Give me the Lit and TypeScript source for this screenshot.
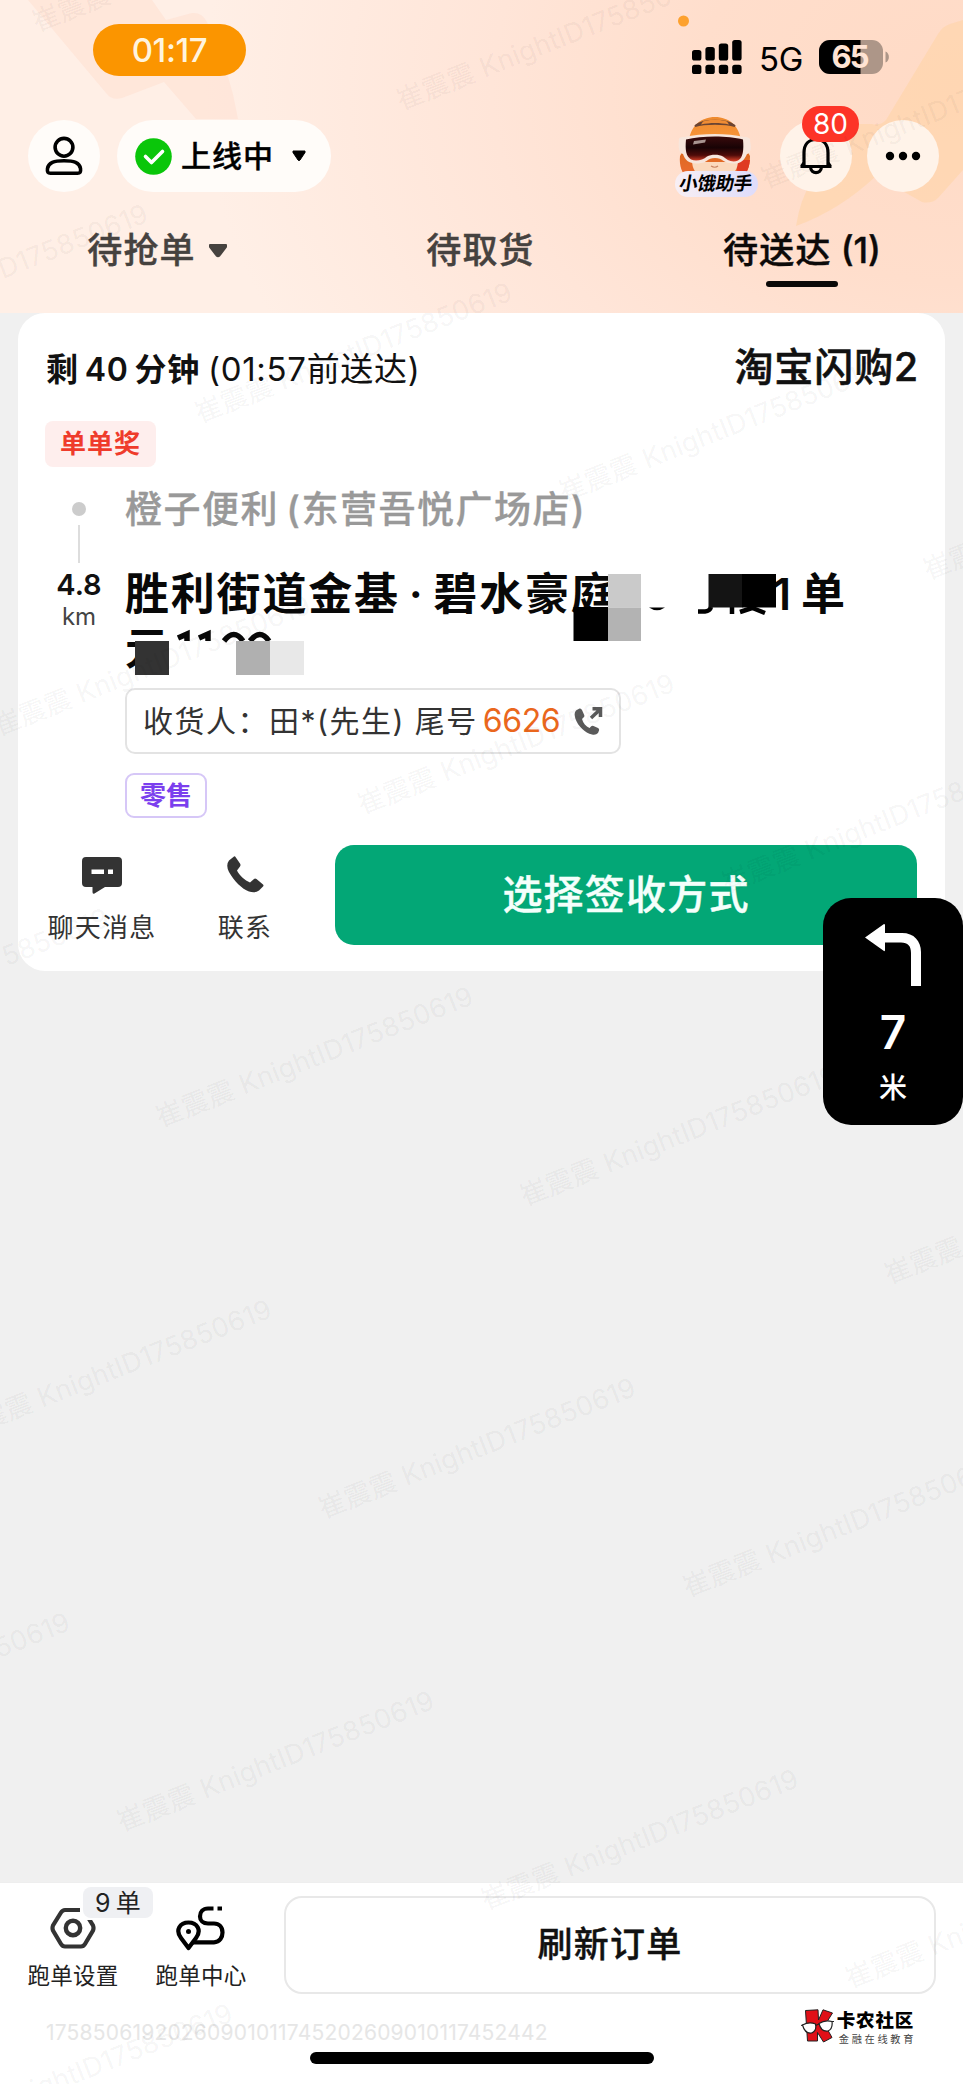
import { LitElement, html, svg, css } from "lit";
import { customElement } from "lit/decorators.js";

const shared = css`
  :host { display: block; box-sizing: border-box; font-family: Inter, "Noto Sans CJK SC", sans-serif; line-height: 1.3; }
  * { box-sizing: border-box; }
  svg { display: block; flex: none; }
  span, div { white-space: nowrap; }
`;

@customElement("status-bar")
class StatusBar extends LitElement {
  static styles = [shared, css`
    .bar { display: flex; height: 120px; padding: 24px 73px 0 93px; }
    .clock { width: 153px; height: 52px; border-radius: 26px; background: #fb9500; color: #fff4de;
      font-size: 33px; font-weight: 500; display: flex; align-items: center; justify-content: center; letter-spacing: -0.4px; }
    .right { margin-left: auto; padding-top: 16px; height: 52px; display: flex; align-items: flex-start; }
    .net { font-size: 33px; line-height: 40px; margin: -1px 15px 0 16px; letter-spacing: -0.3px; width: 46px; text-align: center; }
  `];
  render() {
    return html`<div class="bar">
      <div class="clock">01:17</div>
      <div class="right">
        <svg width="50" height="34" viewBox="0 0 50 34">
          ${[10, 7, 3.5, 0].map((t, i) => svg`<rect x=${i * 13.4} y=${t} width="9.4" height=${20.5 - t} rx="2.6"/>
          <rect x=${i * 13.4} y="24.8" width="9.4" height="9.2" rx="2.6"/>`)}
        </svg>
        <span class="net">5G</span>
        <svg width="71" height="34" viewBox="0 0 71 34">
          <defs><clipPath id="b"><rect width="64" height="34" rx="11"/></clipPath></defs>
          <g clip-path="url(#b)"><rect width="64" height="34" fill="#ad9688"/><rect width="41.5" height="34"/></g>
          <path d="M66.5 11.5c4.500 1.500 4.500 9.500 0 11z" fill="#ad9688"/>
          <text x="31.500" y="28" font-size="31" font-weight="700" fill="#ffe4d4" text-anchor="middle" font-family="Inter" textLength="38">65</text>
        </svg>
      </div>
    </div>`;
  }
}

@customElement("tool-bar")
class ToolBar extends LitElement {
  static styles = [shared, css`
    .bar { display: flex; height: 72px; padding: 0 24px 0 27.500px; align-items: center; }
    .round { width: 72px; height: 72px; border-radius: 36px; background: #fffcf9; display: flex; align-items: center; justify-content: center; position: relative; }
    .soft { background: #fff3e9; }
    .online { margin-left: 17.500px; width: 214px; height: 72px; border-radius: 36px; background: #fffcf9; display: flex; align-items: center; padding-left: 18px; font-size: 30px; font-weight: 500; letter-spacing: 1px; -webkit-text-stroke: .4px; }
    .online span { margin: 0 18px 0 9px; }
    .helper { margin-left: auto; margin-right: 20px; width: 86px; height: 84px; }
    .more { margin-left: 15.500px; }
    .badge { position: absolute; left: 22.500px; top: -14px; width: 57px; height: 36px; border-radius: 18px; background: #fd3427; color: #fff; font-size: 28px; display: flex; align-items: center; justify-content: center; }
  `];
  render() {
    return html`<div class="bar">
      <div class="round"><svg width="40" height="40" viewBox="0 0 40 40" fill="none" stroke="#000" stroke-width="3.600">
        <circle cx="20" cy="11.300" r="8.900"/><path d="M3.500 32.500C4.500 26.500 10 24.800 20 24.800S35.500 26.500 36.500 32.500C37 36 36 37.200 33.500 37.200H6.500C4 37.200 3 36 3.500 32.500Z"/></svg></div>
      <div class="online">
        <svg width="37" height="37" viewBox="0 0 37 37"><circle cx="18.500" cy="18.500" r="18.300" fill="#0ac60a"/><path d="M10.500 18.500l6 6L27.500 13.500" fill="none" stroke="#fff" stroke-width="3.600" stroke-linecap="round" stroke-linejoin="round"/></svg>
        <span>上线中</span>
        <svg width="14" height="12" viewBox="0 0 14 12"><path d="M1 1h12v1.500L8 10Q7 11.200 6 10L1 2.500z" stroke="#000" stroke-linejoin="round"/></svg>
      </div>
      <svg class="helper" width="86" height="84" viewBox="0 -2 86 84">
        <defs>
          <linearGradient id="v" x1="0" y1="0" x2="0" y2="1"><stop offset="0" stop-color="#3a0b0c"/><stop offset=".45" stop-color="#180305"/><stop offset=".75" stop-color="#4e0b09"/><stop offset="1" stop-color="#e0442a"/></linearGradient>
          <linearGradient id="h" x1="0" y1="0" x2="0" y2="1"><stop offset="0" stop-color="#ee8a2e"/><stop offset=".35" stop-color="#f79438"/><stop offset=".6" stop-color="#dd6a22"/><stop offset="1" stop-color="#ee6a30"/></linearGradient>
          <linearGradient id="p" x1="0" y1="0" x2="1" y2="0"><stop offset="0" stop-color="#f8eff4"/><stop offset="1" stop-color="#dedcfb"/></linearGradient>
        </defs>
        <path d="M15 24C17 10 27 1 41 1S65 10 67 24L76 40C76 52 72 60 66 62H14C8 58 5 50 6 40Z" fill="url(#h)"/>
        <path d="M62 44H76C75 54 71 61 64 62Z" fill="#df3b22"/>
        <path d="M21 10C30 3 52 3 61 10C51 7 31 7 21 10Z" fill="#6b4433" stroke="#6b4433" stroke-width="2"/>
        <path d="M29 5.500C35 3 47 3 53 5.500L55 8.500C46 6.500 36 6.500 27 8.500Z" fill="#f08c34"/>
        <path d="M18 46H64C63 56 58 62 41 62S19 56 18 46Z" fill="#fbd9bd"/>
        <path d="M37 50Q41 52.500 44 50" fill="none" stroke="#c98462" stroke-width="1.200"/>
        <path d="M5 24C4 22 7 21 10 21C28 17 54 17 70 21C75 21 77 23 76 25C78 33 76 38 73 38C70 45 66 48 59 47.500C48 47 49 42 41 42S34 47 24 47.500C15 48 11 44 9 38C5 37 4 32 5 24Z" fill="#f7e6dc"/>
        <path d="M12 23.500C28 19.500 54 19.500 69 23.500C70 34 69 42 64 44.500C58 47 53 44 49 40.500C45 38 37 38 33 40.500C29 44 22 46 17 43.500C12 40 11 34 12 23.500Z" fill="url(#v)"/>
        <path d="M20 25l12-1.500-1 3-12 2z" fill="#a89490"/>
        <rect x="1" y="55" width="83" height="26" rx="13" fill="url(#p)"/>
        <text x="41" y="74.500" text-anchor="middle" font-size="18.500" font-weight="700" textLength="73" transform="translate(13 0) skewX(-10)" font-family="Noto Sans CJK SC">小饿助手</text>
      </svg>
      <div class="round soft"><svg width="34" height="40" viewBox="0 0 34 40" fill="none" stroke="#000" stroke-width="3.200" stroke-linejoin="round">
        <path d="M5 29V17C5 8 10 3.500 17 3.500S29 8 29 17V29"/><path d="M1.500 30.500H32.500M5 27L2.500 30.500M29 27L31.500 30.500"/><path d="M11.500 31C12 38.500 22 38.500 22.500 31"/></svg>
        <div class="badge">80</div></div>
      <div class="round soft more"><svg width="36" height="10" viewBox="0 0 36 10"><circle cx="5" cy="5" r="4.200"/><circle cx="18" cy="5" r="4.200"/><circle cx="31" cy="5" r="4.200"/></svg></div>
    </div>`;
  }
}

@customElement("order-tabs")
class OrderTabs extends LitElement {
  static styles = [shared, css`
    .tabs { display: grid; grid-template-columns: 320px 321px 322px; height: 121px; padding-top: 36px; color: #46423f; font-size: 35px; font-weight: 500; letter-spacing: 1.200px; -webkit-text-stroke: .4px; }
    .tab { display: flex; flex-direction: column; align-items: center; gap: 8px; line-height: 45px; }
    .row { display: flex; align-items: center; gap: 12px; }
    .first { padding-right: 5px; }
    .on { color: #0c0a09; }
    .paren { letter-spacing: 0; margin-left: 9px; }
    .line { width: 72px; height: 6px; border-radius: 3px; background: #0b0908; }
    .on .row { gap: 0; padding-right: 0; }
  `];
  render() {
    return html`<div class="tabs">
      <div class="tab first"><div class="row">待抢单<svg width="20" height="16" viewBox="0 0 20 16"><path d="M2 2h16v2L11.500 12.500Q10 14 8.500 12.500L2 4z" fill="#46423f" stroke="#46423f" stroke-width="2" stroke-linejoin="round"/></svg></div></div>
      <div class="tab">待取货</div>
      <div class="tab on"><div class="row">待送达<span class="paren">(1)</span></div><div class="line"></div></div>
    </div>`;
  }
}

@customElement("order-card")
class OrderCard extends LitElement {
  static styles = [shared, css`
    .card { background: #fff; border-radius: 27px; height: 658px; margin: 0 18px; padding: 28px 28px 26px 27px; display: flex; flex-direction: column; }
    .head { display: flex; justify-content: space-between; align-items: center; height: 56px; color: #111; }
    .eta { display: flex; align-items: baseline; font-size: 33px; letter-spacing: .7px; padding-left: 1px; }
    .eta b { font-size: 32px; font-weight: 600; margin-right: 8px; display: flex; align-items: baseline; gap: 6px; }
    .brand { font-size: 39px; font-weight: 500; letter-spacing: .9px; margin-top: -4px; margin-right: -2px; -webkit-text-stroke: .6px; }
    .reward { margin-top: 24px; width: 111px; height: 46px; border-radius: 8px; background: #feeeed; color: #ef3b2b; font-size: 26px; font-weight: 600; letter-spacing: 1px; display: flex; align-items: center; justify-content: center; }
    .route { display: grid; grid-template-columns: 68px 1fr; column-gap: 12px; margin-top: 12px; }
    .rail { display: flex; flex-direction: column; align-items: center; padding-top: 23px; }
    .dot { width: 14px; height: 14px; border-radius: 7px; background: #ccc; }
    .stem { width: 2px; height: 38px; background: #ddd; margin: 9px 0 3px; }
    .dist { font-size: 29px; font-weight: 600; line-height: 38px; color: #111; }
    .unit { font-size: 24px; line-height: 26px; color: #444; }
    .store { font-size: 37px; font-weight: 500; color: #999; line-height: 62px; height: 60px; letter-spacing: 1.500px; word-spacing: -4px; -webkit-text-stroke: .3px; }
    .addr { position: relative; font-size: 44px; font-weight: 600; color: #080808; line-height: 55px; height: 138px; padding-top: 28px; letter-spacing: 1.800px; }
    .first { display: flex; word-spacing: -4px; }
    .tail { margin-left: 156px; display: flex; gap: 8px; }
    .mosaic { position: absolute; left: 0; top: 31px; }
    .contact { margin-top: 11px; width: 496px; height: 66px; border: 2px solid #e3e3e3; border-radius: 10px; display: flex; align-items: center; padding-left: 16px; font-size: 30px; color: #333; letter-spacing: 1.500px; }
    .phone { color: #ea671d; font-size: 32px; letter-spacing: -0.4px; margin: 0 14px 0 5px; }
    .kind { margin-top: 19px; width: 82px; height: 45px; border: 2px solid #d6c7f7; border-radius: 9px; color: #7b3fee; font-size: 26px; font-weight: 600; display: flex; align-items: center; justify-content: center; }
    .actions { display: flex; margin-top: 27px; height: 100px; }
    .act { display: flex; flex-direction: column; align-items: center; width: 114px; padding-top: 9px; font-size: 26px; color: #333; line-height: 34px; gap: 17px; letter-spacing: 1.200px; }
    .act.call { margin-left: 29px; }
    .sign { margin-left: auto; width: 582px; border-radius: 19px; background: #03a776; color: #f4fffb; font-size: 40px; font-weight: 500; letter-spacing: 1.200px; -webkit-text-stroke: .4px; display: flex; align-items: center; justify-content: center; }
  `];
  render() {
    return html`<div class="card">
      <div class="head">
        <div class="eta"><b><span>剩</span><span>40</span><span>分钟</span></b><span>(01:57前送达)</span></div>
        <div class="brand">淘宝闪购2</div>
      </div>
      <div class="reward">单单奖</div>
      <div class="route">
        <div class="rail"><div class="dot"></div><div class="stem"></div><div class="dist">4.8</div><div class="unit">km</div></div>
        <div>
          <div class="store">橙子便利 (东营吾悦广场店)</div>
          <div class="addr">
            <div class="first"><span>胜利街道金基 · 碧水豪庭</span><span class="tail"><span>1</span><span>单</span></span></div>
            <div>元</div>
            <svg class="mosaic" width="720" height="106" viewBox="125 570 720 106">
              <rect x="608" y="570" width="33" height="48" fill="#fff"/>
              <rect x="573.500" y="607" width="34.500" height="34"/>
              <rect x="608" y="574" width="33" height="33.500" fill="#cacaca"/><rect x="608" y="607.500" width="33" height="33.500" fill="#b3b3b3"/>
              <path d="M649 607.500Q657 613 665 607.500Z"/>
              <path d="M698 611.500H705Q710 611 711 607" fill="none" stroke="#000" stroke-width="4.500"/>
              <path d="M732 607V614M740 612L755 607M750 607L765 613" fill="none" stroke="#000" stroke-width="4.500"/>
              <rect x="708.500" y="574" width="34" height="33.500" fill="#141414"/><rect x="742" y="574" width="34" height="33.500"/>
              <rect x="135" y="641" width="70" height="34" fill="#fff"/>
              <rect x="135" y="641" width="34" height="34" fill="#333"/>
              <path d="M178 638L187 634V641M199 638L208 634V641M224 641Q234 628 243 641M250 641Q260 628 269 641" fill="none" stroke="#080808" stroke-width="5.500"/>
              <rect x="236" y="641" width="34" height="34" fill="#b0b0b0"/><rect x="270" y="641" width="34" height="34" fill="#e8e8e8"/>
            </svg>
          </div>
          <div class="contact">收货人：田*(先生) 尾号<span class="phone">6626</span>
            <svg width="29" height="29" viewBox="0 0 29 29"><path d="M5.500 1.500L2 3.500Q-.5 6 1.500 12C4 19 11 26 18 27.500Q22 28.300 24 26L25 23.500Q25.500 22 24 21L19.500 19Q18 18.500 17 19.500L15.500 21C12 19.500 9 16 8 12L10 10Q10.800 9 10 7.500L8 3Q7 1 5.500 1.500Z" fill="#5a5a5a"/><path d="M17 11L26 2.500M18.500 1.800H26.500V10" fill="none" stroke="#5a5a5a" stroke-width="3.500"/></svg>
          </div>
          <div class="kind">零售</div>
        </div>
      </div>
      <div class="actions">
        <div class="act"><svg width="40" height="40" viewBox="0 0 40 40"><path d="M4 3H36Q40 3 40 7V29Q40 33 36 33H23L12.500 39.500Q10.500 40.500 10.500 38V33H4Q0 33 0 29V7Q0 3 4 3Z" fill="#333"/><rect x="9.500" y="15.500" width="12.500" height="4.500" fill="#fff"/><rect x="26" y="15.500" width="5" height="4.500" fill="#fff"/></svg>聊天消息</div>
        <div class="act call"><svg width="40" height="40" viewBox="0 0 40 40"><path d="M9 2.500L4 6.500Q.5 11 4 18C9 27 17 35 24 37.500Q30 39.500 34 36.500L38 32.500Q39 31.500 38 30.500L31.500 25Q30 24 29 25L25 28.500C20 26.500 14 21 12 16.500L15 12.500Q16 11 15 9.500L10.500 3Q10 2 9 2.500Z" fill="#333"/></svg>联系</div>
        <div class="sign">选择签收方式</div>
      </div>
    </div>`;
  }
}

@customElement("bottom-bar")
class BottomBar extends LitElement {
  static styles = [shared, css`
    :host { background: #fff; height: 202px; padding-top: 13px; border-top: 1px solid #eee; }
    .row { display: flex; height: 98px; padding: 0 27px 0 27px; }
    .item { position: relative; width: 92px; display: flex; flex-direction: column; align-items: center; padding-top: 9px; font-size: 22.500px; letter-spacing: .3px; line-height: 30px; gap: 10px; color: #222; }
    .item + .item { margin-left: 36px; }
    .count { position: absolute; left: 56px; top: -9px; width: 70px; height: 31px; border-radius: 8px; background: #eff0f3; font-size: 25px; display: flex; align-items: center; justify-content: center; gap: 5px; }
    .refresh { margin-left: auto; width: 652px; border: 2px solid #e8e8e8; border-radius: 18px; font-size: 35px; font-weight: 500; letter-spacing: 1.300px; color: #111; -webkit-text-stroke: .4px; display: flex; align-items: center; justify-content: center; }
    .foot { display: flex; justify-content: space-between; padding: 15px 49px 0 46px; height: 50px; }
    .code { font-size: 21px; line-height: 28px; letter-spacing: .2px; color: #e6e6e6; padding-top: 10px; }
    .brand { display: flex; gap: 3px; }
    .names { display: flex; flex-direction: column; }
    .big { font-size: 18.500px; font-weight: 900; line-height: 22px; letter-spacing: .8px; color: #000; }
    .small { font-size: 10.200px; line-height: 17px; letter-spacing: 2.700px; margin-right: -2.700px; color: #444; padding-left: 2px; }
    .home { width: 344px; height: 12px; border-radius: 6px; background: #000; margin: 8px auto 0; }
  `];
  render() {
    return html`<div class="row">
        <div class="item"><svg width="46" height="46" viewBox="0 0 46 46" fill="none" stroke="#333" stroke-width="4.200"><path d="M15 5H31Q33.500 5 35 7.500L43 20.500Q44 23 43 25.500L35 39Q33.500 41.500 31 41.500H15Q12.500 41.500 11 39L3 25.500Q2 23 3 20.500L11 7.500Q12.500 5 15 5Z"/><circle cx="23" cy="23" r="7.200" stroke-width="4.400"/><rect x="30" y="0" width="16" height="15" fill="#fff" stroke="none"/></svg>跑单设置<div class="count"><span>9</span><span>单</span></div></div>
        <div class="item"><svg width="50" height="46" viewBox="0 0 50 46" fill="none" stroke="#000" stroke-width="4.200"><path d="M12.500 43L5 33C-1 25 4 17.500 12.500 17.500S26 25 20 33Z" stroke-linejoin="round"/><circle cx="12.500" cy="26.500" r="2.500" fill="#000" stroke="none"/><path d="M17 37.300H38C44 37.300 46.500 32 46.500 27.500C46.500 22 43 18.500 38 18.500H32C27 18.500 24 15.500 24 11.500C24 7 27 3.500 32 3.500H37.500M41.500 3.500H46"/></svg>跑单中心</div>
        <div class="refresh">刷新订单</div>
      </div>
      <div class="foot">
        <div class="code">17585061920260901011745202609010117452442</div>
        <div class="brand">
          <svg width="33" height="34" viewBox="0 0 33 34"><path d="M4.500 1.500L17 .8L17.500 11L22 .8L31.500 4L24 16L31 28.500L22.500 33L16.500 23.500V32H6.500Z" fill="#e01018" stroke="#222" stroke-width="1"/><path d="M1.500 16Q8 12.500 14.500 15Q16 22 10.500 24Q4 25 1.500 16ZM18 14.500Q24 10.500 31 12.500Q32 20 27 22Q20 23 18 14.500Z" fill="#fff" stroke="#222" stroke-width="1.200"/><path d="M0 16.500L2 16M31 12.500H33M14.500 16.500L18 15" stroke="#222" stroke-width="1.200"/></svg>
          <div class="names"><div class="big">卡农社区</div><div class="small">金融在线教育</div></div>
        </div>
      </div>
      <div class="home"></div>`;
  }
}

@customElement("app-root")
class AppRoot extends LitElement {
  static styles = [shared, css`
    :host { position: relative; width: 963px; height: 2084px; overflow: hidden; background: #f0f0f0; }
    .page { height: 2084px; display: flex; flex-direction: column; }
    .header { position: relative; height: 313px; background: radial-gradient(ellipse 760px 560px at 100% 28%, #ffdac5 0%, #ffdecc 35%, #ffe5d8 62%, #ffefe6 100%); }
    .decor { position: absolute; left: 0; top: 0; }
    .content { position: relative; }
    .space { flex: 1; }
    .marks { position: absolute; left: 0; top: 0; pointer-events: none; }
    .nav { position: absolute; left: 823px; top: 897.500px; width: 140px; height: 227px; border-radius: 28px; background: #000; color: #fff; display: flex; flex-direction: column; align-items: center; padding-top: 26px; }
    .seven { font-size: 46px; font-weight: 600; line-height: 56px; margin-top: 18px; }
    .metre { font-size: 28px; font-weight: 500; line-height: 36px; margin-top: 10px; }
  `];
  render() {
    const marks: unknown[] = [];
    for (let r = 0; r < 8; r++) {
      for (let c = -3; c < 8; c++) {
        const x = 37 + c * 364.2 - r * 201.6;
        const y = 32 + c * 78.4 + r * 312.9;
        if (x > -330 && x < 963 && y > 0 && y < 2200) {
          marks.push(svg`<text transform=${`translate(${x} ${y}) rotate(-21.500)`} textLength="338">崔震震 KnightID175850619</text>`);
        }
      }
    }
    return html`<div class="page">
        <div class="header">
          <svg class="decor" width="963" height="313" viewBox="0 0 963 313">
            <path d="M28 0H152L166 20L192 13Q202 12 207 22Q230 70 238 119H196L164 82L122 98Q112 101 106 93Z" fill="#ffe2d4" opacity=".65"/>
            <path d="M963 20L950 24Q943 26 938 34L886 120Q880 126 872 124H856L812 180Q800 200 796 226Q840 210 876 176L922 202Q932 204 938 198L963 170Z" fill="#ffd3a4" opacity=".55"/>
            <circle cx="683.500" cy="21" r="5.500" fill="#fda12e"/>
          </svg>
          <div class="content"><status-bar></status-bar><tool-bar></tool-bar><order-tabs></order-tabs></div>
        </div>
        <order-card></order-card>
        <div class="space"></div>
        <bottom-bar></bottom-bar>
      </div>
      <svg class="marks" width="963" height="2084" viewBox="0 0 963 2084" fill="#000" fill-opacity=".055" font-size="27">${marks}</svg>
      <div class="nav">
        <svg width="58" height="62" viewBox="0 0 58 62"><path d="M1 13.500L20 0Q21 0 21 1V9H38C50 9 57 17 57 28V62H47V29C47 22 44 18.500 37 18.500H21V26Q21 27.500 20 27Z" fill="#fff"/></svg>
        <div class="seven">7</div><div class="metre">米</div>
      </div>`;
  }
}
